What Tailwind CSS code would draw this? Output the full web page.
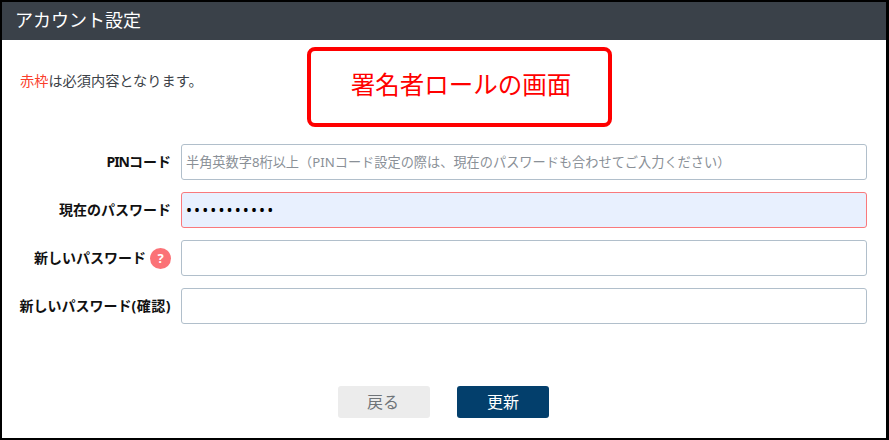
<!DOCTYPE html>
<html lang="ja">
<head>
    <meta charset="UTF-8">
    <title>アカウント設定</title>
    <script src="https://cdn.jsdelivr.net/npm/@tailwindcss/browser@4"></script>
</head>
<body class="bg-white font-['Noto_Sans','Noto_Sans_CJK_JP',sans-serif]">
    <div class="relative w-[889px] h-[440px] border-2 border-r-[3px] border-black flex flex-col overflow-hidden">
        <!-- header -->
        <div class="h-[38px] shrink-0 bg-[#3a4149] text-white text-[18px] leading-[36px] pl-[13px]">アカウント設定</div>

        <!-- note -->
        <p class="mt-[31px] ml-[18px] text-[14.2px] leading-[20px] text-[#3c4248]"><span class="text-[#fa3e2c]">赤枠</span>は必須内容となります。</p>

        <!-- form -->
        <div class="mt-[53px] flex flex-col gap-[12px]">
            <div class="flex items-center">
                <label class="w-[169px] text-right text-[14px] font-bold text-[#111] pb-[2px]"><span class="tracking-[-1px]">PIN</span>コード</label>
                <input type="text" placeholder="半角英数字8桁以上（PINコード設定の際は、現在のパスワードも合わせてご入力ください）" class="ml-[10px] w-[686px] h-[36px] px-[4px] text-[13.2px] bg-white border border-[#b1bfcb] rounded-[3px] placeholder:text-[#8a9097]">
            </div>
            <div class="flex items-center">
                <label class="w-[169px] text-right text-[14px] font-bold text-[#111] pb-[2px]">現在のパスワード</label>
                <input type="password" value="Password123" class="ml-[10px] w-[686px] h-[36px] px-[4px] text-[16px] tracking-[2.1px] bg-[#e8f0fe] border border-[#f9797c] rounded-[3px] text-black">
            </div>
            <div class="flex items-center">
                <div class="w-[169px] flex items-center justify-end gap-[4px]">
                    <label class="text-[14px] font-bold text-[#111] pb-[2px]">新しいパスワード</label>
                    <span class="w-[21px] h-[21px] rounded-full bg-[#fb7277] text-white text-[13px] font-bold leading-[21px] text-center">?</span>
                </div>
                <input type="password" class="ml-[10px] w-[686px] h-[36px] px-[4px] text-[13px] bg-white border border-[#b1bfcb] rounded-[3px]">
            </div>
            <div class="flex items-center">
                <label class="w-[169px] text-right text-[14px] font-bold text-[#111] whitespace-nowrap pb-[2px]">新しいパスワード<span class="tracking-[0.5px]">(確認)</span></label>
                <input type="password" class="ml-[10px] w-[686px] h-[36px] px-[4px] text-[13px] bg-white border border-[#b1bfcb] rounded-[3px]">
            </div>
        </div>

        <!-- buttons -->
        <div class="mt-[62px] ml-[336px] flex gap-[27px]">
            <button class="w-[92px] h-[32px] pr-[2px] rounded-[3px] bg-[#ececec] text-[#6f7478] text-[16px]">戻る</button>
            <button class="w-[92px] h-[32px] rounded-[3px] bg-[#033f6c] text-white text-[16px]">更新</button>
        </div>

        <!-- annotation -->
        <div class="absolute left-[305px] top-[45px] w-[305px] h-[80px] pb-[4px] pl-[3px] border-[4px] border-[#ff0000] rounded-[8px] bg-white flex items-center justify-center text-[24.5px] text-[#ff0000]">署名者ロールの画面</div>
    </div>
</body>
</html>
